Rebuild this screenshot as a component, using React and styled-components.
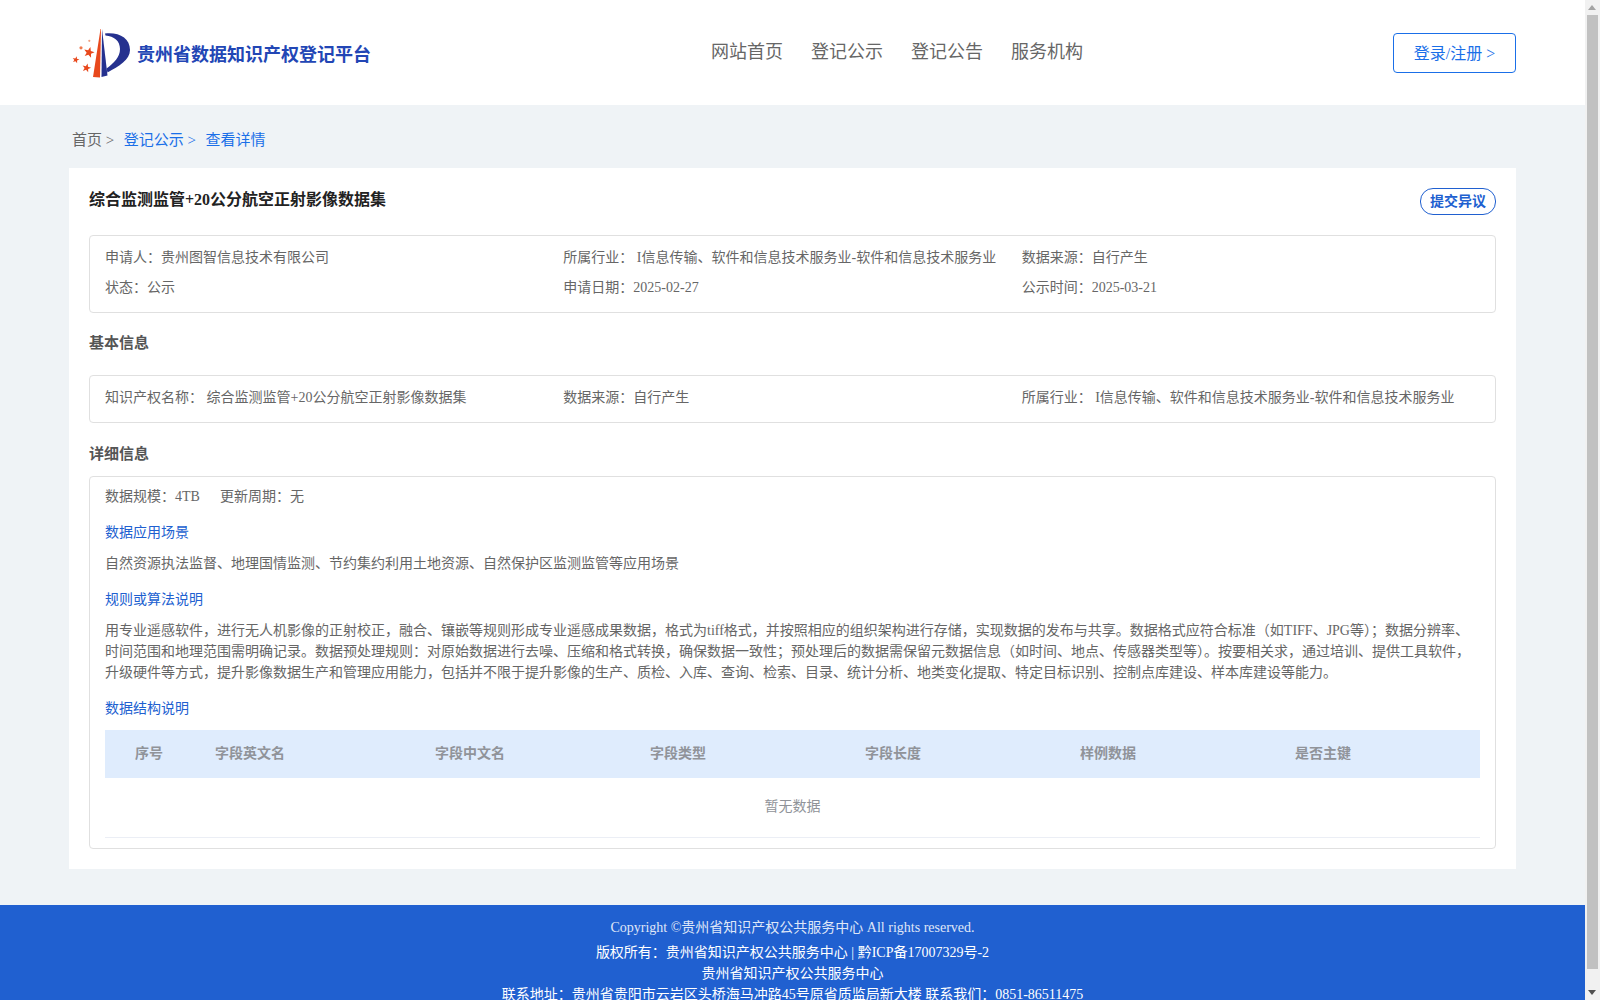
import React from "react";
import styled, { createGlobalStyle } from "styled-components";

const BLUE = "#1a6fe8";
const DEEP_BLUE = "#2060d0";
const TEXT = "#666";

const GlobalStyle = createGlobalStyle`
  html, body {
    margin: 0;
    height: 1000px;
    overflow: hidden;
    background: #eff3f6;
  }
  body {
    font-family: "Liberation Serif", "Noto Sans CJK SC", serif;
    font-size: 14px;
    color: ${TEXT};
  }
  * { box-sizing: border-box; }
  ::-webkit-scrollbar { display: none; }
`;

const NAV_ITEMS = ["网站首页", "登记公示", "登记公告", "服务机构"];
const TABLE_COLUMNS = ["序号", "字段英文名", "字段中文名", "字段类型", "字段长度", "样例数据", "是否主键"];

const ALGORITHM_TEXT =
  "用专业遥感软件，进行无人机影像的正射校正，融合、镶嵌等规则形成专业遥感成果数据，格式为tiff格式，并按照相应的组织架构进行存储，实现数据的发布与共享。数据格式应符合标准（如TIFF、JPG等）；数据分辨率、时间范围和地理范围需明确记录。数据预处理规则：对原始数据进行去噪、压缩和格式转换，确保数据一致性；预处理后的数据需保留元数据信息（如时间、地点、传感器类型等）。按要相关求，通过培训、提供工具软件，升级硬件等方式，提升影像数据生产和管理应用能力，包括并不限于提升影像的生产、质检、入库、查询、检索、目录、统计分析、地类变化提取、特定目标识别、控制点库建设、样本库建设等能力。";

function Star({ cx, cy, r }) {
  const points = [];
  for (let i = 0; i < 10; i++) {
    const radius = i % 2 === 0 ? r : r * 0.42;
    const angle = (Math.PI / 5) * i - Math.PI / 2 + 0.25;
    points.push(`${cx + radius * Math.cos(angle)},${cy + radius * Math.sin(angle)}`);
  }
  return <polygon points={points.join(" ")} fill="#e8481c" />;
}

function LogoMark() {
  return (
    <LogoSvg viewBox="0 0 70 60" aria-hidden="true">
      <path d="M30.5 4 L23 52 L30 52.5 L31 4 Z" fill="#e8481c" />
      <path d="M32 4 L31.5 52 L37.5 50.5 Z" fill="#25318f" />
      <path
        d="M35 8.5 C49 7 60 13 60 25 C60 35 49 41 37.5 47.5 L36.5 43.5 C44 38 50 32 50 24 C50 16 44 11 35.5 10.5 Z"
        fill="#25318f"
      />
      <Star cx={19} cy={27.5} r={5.6} />
      <Star cx={16.5} cy={43} r={4.6} />
      <Star cx={5.8} cy={34.8} r={3.6} />
      <circle cx={11} cy={22.8} r={1.6} fill="#ef7a50" />
      <circle cx={19.3} cy={15.8} r={1.1} fill="#f0a080" />
    </LogoSvg>
  );
}

function App() {
  return (
    <Page>
      <GlobalStyle />
      <Header>
        <Brand>
          <LogoMark />
          <BrandName>贵州省数据知识产权登记平台</BrandName>
        </Brand>
        <Nav>
          {NAV_ITEMS.map((item) => (
            <NavLink key={item}>{item}</NavLink>
          ))}
        </Nav>
        <LoginButton>登录/注册 &gt;</LoginButton>
      </Header>

      <Main>
        <Breadcrumb>
          <Crumb>首页 &gt;</Crumb>
          <Crumb $active>登记公示 &gt;</Crumb>
          <Crumb $active>查看详情</Crumb>
        </Breadcrumb>

        <Card>
          <TitleRow>
            <Title>综合监测监管+20公分航空正射影像数据集</Title>
            <ObjectionButton>提交异议</ObjectionButton>
          </TitleRow>

          <InfoBox>
            <InfoGrid>
              <InfoItem>申请人：贵州图智信息技术有限公司</InfoItem>
              <InfoItem>所属行业： I信息传输、软件和信息技术服务业-软件和信息技术服务业</InfoItem>
              <InfoItem>数据来源：自行产生</InfoItem>
              <InfoItem>状态：公示</InfoItem>
              <InfoItem>申请日期：2025-02-27</InfoItem>
              <InfoItem>公示时间：2025-03-21</InfoItem>
            </InfoGrid>
          </InfoBox>

          <SectionTitle>基本信息</SectionTitle>
          <InfoBox>
            <InfoGrid>
              <InfoItem>知识产权名称： 综合监测监管+20公分航空正射影像数据集</InfoItem>
              <InfoItem>数据来源：自行产生</InfoItem>
              <InfoItem>所属行业： I信息传输、软件和信息技术服务业-软件和信息技术服务业</InfoItem>
            </InfoGrid>
          </InfoBox>

          <SectionTitle $tight>详细信息</SectionTitle>
          <DetailBox>
            <StatRow>
              <span>数据规模：4TB</span>
              <span>更新周期：无</span>
            </StatRow>
            <DetailHeading>数据应用场景</DetailHeading>
            <DetailText>自然资源执法监督、地理国情监测、节约集约利用土地资源、自然保护区监测监管等应用场景</DetailText>
            <DetailHeading>规则或算法说明</DetailHeading>
            <DetailText>{ALGORITHM_TEXT}</DetailText>
            <DetailHeading>数据结构说明</DetailHeading>
            <TableHead>
              {TABLE_COLUMNS.map((column) => (
                <HeadCell key={column}>{column}</HeadCell>
              ))}
            </TableHead>
            <EmptyRow>暂无数据</EmptyRow>
          </DetailBox>
        </Card>
      </Main>

      <Footer>
        <CopyrightLine>Copyright ©贵州省知识产权公共服务中心 All rights reserved.</CopyrightLine>
        <FooterLine>版权所有：贵州省知识产权公共服务中心 | 黔ICP备17007329号-2</FooterLine>
        <FooterLine>贵州省知识产权公共服务中心</FooterLine>
        <FooterLine>联系地址：贵州省贵阳市云岩区头桥海马冲路45号原省质监局新大楼 联系我们：0851-86511475</FooterLine>
      </Footer>

      <Scrollbar>
        <ScrollArrow $up />
        <ScrollThumb />
        <ScrollArrow />
      </Scrollbar>
    </Page>
  );
}

const Page = styled.div`
  width: 1585px;
  height: 1000px;
  overflow: hidden;
`;

const Header = styled.header`
  display: flex;
  align-items: center;
  height: 105px;
  padding: 0 69px 0 72px;
  background: #fff;
`;

const Brand = styled.div`
  display: flex;
  align-items: center;
  width: 639px;
`;

const LogoSvg = styled.svg`
  flex: none;
  width: 70px;
  height: 60px;
  margin: 5px -3px 0 -2px;
`;

const BrandName = styled.span`
  font-size: 18px;
  font-weight: 700;
  color: #2246b5;
  white-space: nowrap;
`;

const Nav = styled.nav`
  display: flex;
  gap: 28px;
  margin-top: -5px;
`;

const NavLink = styled.a`
  font-size: 18px;
  color: ${TEXT};
`;

const LoginButton = styled.button`
  width: 123px;
  height: 40px;
  margin-left: auto;
  padding: 0 0 2px;
  border: 1px solid ${BLUE};
  border-radius: 4px;
  background: #fff;
  font-family: inherit;
  font-size: 16px;
  color: ${BLUE};
`;

const Main = styled.main`
  padding: 0 69px 36px;
`;

const Breadcrumb = styled.div`
  display: flex;
  gap: 9.5px;
  height: 63px;
  padding: 25px 0 0 3px;
  font-size: 15px;
  line-height: 20px;
`;

const Crumb = styled.span`
  color: ${(props) => (props.$active ? BLUE : TEXT)};
`;

const Card = styled.section`
  padding: 20px 20px 20px;
  background: #fff;
`;

const TitleRow = styled.div`
  display: flex;
  justify-content: space-between;
  align-items: flex-start;
  margin-bottom: 20px;
`;

const Title = styled.h1`
  margin: 1px 0 0;
  font-size: 16px;
  font-weight: 700;
  line-height: 22px;
  color: #222;
`;

const ObjectionButton = styled.button`
  width: 76px;
  height: 27px;
  padding: 0 0 4px;
  border: 1px solid ${DEEP_BLUE};
  border-radius: 13px;
  background: #fff;
  font-family: inherit;
  font-size: 14px;
  font-weight: 700;
  color: ${DEEP_BLUE};
`;

const InfoBox = styled.div`
  padding: 7px 15px 9px;
  border: 1px solid #e0e0e0;
  border-radius: 4px;
`;

const InfoGrid = styled.div`
  display: grid;
  grid-template-columns: repeat(3, 1fr);
`;

const InfoItem = styled.div`
  line-height: 30px;
  white-space: nowrap;
`;

const SectionTitle = styled.h2`
  margin: ${(props) => (props.$tight ? "20px 0 11px" : "19px 0 21px")};
  font-size: 15px;
  font-weight: 700;
  line-height: 22px;
  color: #555;
`;

const DetailBox = styled.div`
  padding: 9px 15px 10px;
  border: 1px solid #e0e0e0;
  border-radius: 4px;
`;

const StatRow = styled.div`
  display: flex;
  gap: 20px;
  line-height: 22px;
`;

const DetailHeading = styled.h3`
  margin: 14px 0 9px;
  font-size: 14px;
  font-weight: 400;
  line-height: 22px;
  color: ${DEEP_BLUE};
`;

const DetailText = styled.p`
  margin: 0;
  padding-bottom: 1px;
  line-height: 21px;
`;

const TableHead = styled.div`
  display: grid;
  grid-template-columns: 110px 220px repeat(4, 215px) 1fr;
  align-items: center;
  height: 48px;
  margin-top: 10px;
  padding-bottom: 5px;
  background: #dfecfd;
`;

const HeadCell = styled.div`
  font-weight: 700;
  color: #909399;

  &:first-child {
    padding-left: 30px;
  }
`;

const EmptyRow = styled.div`
  display: flex;
  align-items: center;
  justify-content: center;
  height: 60px;
  padding-bottom: 6px;
  border-bottom: 1px solid #ebeef5;
  color: #909399;
`;

const Footer = styled.footer`
  padding: 12px 0 20px;
  background: ${DEEP_BLUE};
  color: #fff;
  text-align: center;
  line-height: 21px;
`;

const CopyrightLine = styled.div`
  margin-bottom: 4px;
  opacity: 0.85;
`;

const FooterLine = styled.div``;

const Scrollbar = styled.div`
  position: fixed;
  top: 0;
  right: 0;
  display: flex;
  flex-direction: column;
  width: 15px;
  height: 1000px;
  background: #f1f1f1;
`;

const ScrollArrow = styled.div`
  position: relative;
  flex: none;
  height: 15px;

  &::after {
    content: "";
    position: absolute;
    left: 3px;
    top: 5px;
    border-left: 4px solid transparent;
    border-right: 4px solid transparent;
    ${(props) =>
      props.$up ? "border-bottom: 5px solid #a3a3a3;" : "border-top: 5px solid #505050;"}
  }
`;

const ScrollThumb = styled.div`
  flex: none;
  width: 11px;
  height: 954px;
  margin: 0 2px 16px;
  background: #c1c1c1;
`;

export default App;
